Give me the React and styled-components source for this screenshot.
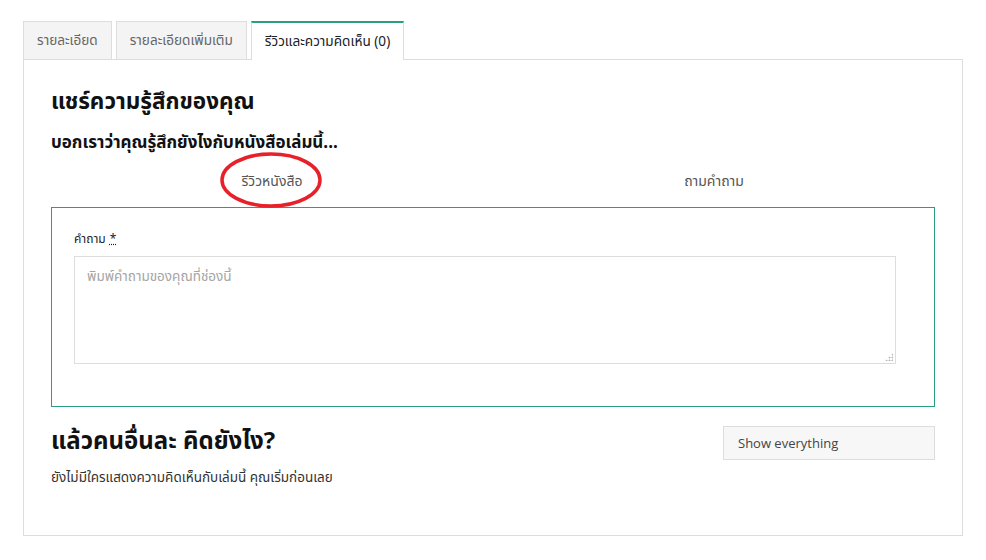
import React from "react";
import styled, { createGlobalStyle } from "styled-components";

const GlobalStyle = createGlobalStyle`
  body {
    margin: 0;
    background: #fff;
    font-family: "Noto Sans Thai", "Noto Sans", "Liberation Sans", sans-serif;
    color: #222;
  }
`;

const Page = styled.div`
  padding: 21px 23px 0;
  width: 940px;
`;

const TabBar = styled.div`
  display: flex;
  gap: 4px;
`;

const Tab = styled.div`
  box-sizing: border-box;
  padding: 0 13px;
  display: flex;
  align-items: center;
  font-size: 13.6px;
  border: 1px solid #ddd;
  border-bottom: none;
  background: ${(p) => (p.active ? "#fff" : "#f4f4f4")};
  color: ${(p) => (p.active ? "#222" : "#666")};
  border-top: ${(p) => (p.active ? "2px solid #2a9d82" : "1px solid #ddd")};
  margin-bottom: ${(p) => (p.active ? "-1px" : "0")};
  height: ${(p) => (p.active ? "39px" : "38px")};
  position: relative;
  z-index: 1;
`;

const Panel = styled.div`
  border: 1px solid #ddd;
  height: 477px;
  box-sizing: border-box;
  padding: 26px 27px 0;
`;

const Heading = styled.h2`
  margin: 0;
  font-size: ${(p) => p.size || 22}px;
  font-weight: 700;
  line-height: 32px;
  color: #111;
`;

const SubHeading = styled.h3`
  margin: 13px 0 0;
  font-size: 17px;
  font-weight: 700;
  line-height: 24px;
  color: #111;
`;

const SubTabs = styled.div`
  display: grid;
  grid-template-columns: 1fr 1fr;
  margin-top: 8px;
  height: 36px;
  align-items: center;
`;

const SubTab = styled.div`
  position: relative;
  text-align: center;
  font-size: 14px;
  color: #555;
`;

const Circle = styled.svg`
  position: absolute;
  left: 50%;
  top: 50%;
  width: 106px;
  height: 58px;
  transform: translate(-50%, -50%);
  margin-left: -1px;
  margin-top: -1px;
  pointer-events: none;
`;

const FormBox = styled.div`
  margin-top: 8px;
  border: 1px solid #2a9d82;
  height: 200px;
  box-sizing: border-box;
  padding: 22px 22px 0;
`;

const Label = styled.label`
  display: block;
  font-size: 12px;
  color: #222;
  line-height: 18px;
`;

const Required = styled.abbr`
  text-decoration: underline dotted;
  margin-left: 4px;
`;

const FieldWrap = styled.div`
  position: relative;
  width: 822px;
  margin-top: 8px;
`;

const TextArea = styled.textarea`
  display: block;
  width: 100%;
  height: 108px;
  box-sizing: border-box;
  border: 1px solid #ddd;
  padding: 10px 12px;
  font-family: inherit;
  font-size: 13.5px;
  color: #333;
  resize: none;
  outline: none;
  &::placeholder {
    color: #a5a5a5;
  }
`;

const Grip = styled.span`
  position: absolute;
  right: 3px;
  bottom: 3px;
  width: 8px;
  height: 8px;
  background-image: radial-gradient(circle, #b5b5b5 0.9px, transparent 1.1px);
  background-size: 3px 3px;
  clip-path: polygon(100% 0, 100% 100%, 0 100%);
  pointer-events: none;
`;

const OthersRow = styled.div`
  display: flex;
  justify-content: space-between;
  align-items: flex-start;
  margin-top: 19px;
`;

const Select = styled.div`
  width: 212px;
  height: 34px;
  box-sizing: border-box;
  border: 1px solid #ddd;
  background: #f7f7f7;
  display: flex;
  align-items: center;
  padding: 0 14px;
  font-size: 13px;
  color: #444;
  font-family: "Open Sans", "Noto Sans", sans-serif;
`;

const Note = styled.p`
  margin: 10px 0 0;
  font-size: 13.5px;
  color: #333;
`;

export default function App() {
  return (
    <>
      <GlobalStyle />
      <Page>
        <TabBar>
          <Tab>รายละเอียด</Tab>
          <Tab>รายละเอียดเพิ่มเติม</Tab>
          <Tab active>รีวิวและความคิดเห็น (0)</Tab>
        </TabBar>
        <Panel>
          <Heading size={22.5}>แชร์ความรู้สึกของคุณ</Heading>
          <SubHeading>บอกเราว่าคุณรู้สึกยังไงกับหนังสือเล่มนี้...</SubHeading>
          <SubTabs>
            <SubTab>
              รีวิวหนังสือ
              <Circle viewBox="0 0 106 58">
                <ellipse cx="53" cy="29" rx="49" ry="26" fill="none" stroke="#e8202a" strokeWidth="3.5" />
              </Circle>
            </SubTab>
            <SubTab>ถามคำถาม</SubTab>
          </SubTabs>
          <FormBox>
            <Label>
              คำถาม<Required title="required">*</Required>
            </Label>
            <FieldWrap>
              <TextArea placeholder="พิมพ์คำถามของคุณที่ช่องนี้" />
              <Grip />
            </FieldWrap>
          </FormBox>
          <OthersRow>
            <div>
              <Heading size={24}>แล้วคนอื่นละ คิดยังไง?</Heading>
              <Note>ยังไม่มีใครแสดงความคิดเห็นกับเล่มนี้ คุณเริ่มก่อนเลย</Note>
            </div>
            <Select>Show everything</Select>
          </OthersRow>
        </Panel>
      </Page>
    </>
  );
}
